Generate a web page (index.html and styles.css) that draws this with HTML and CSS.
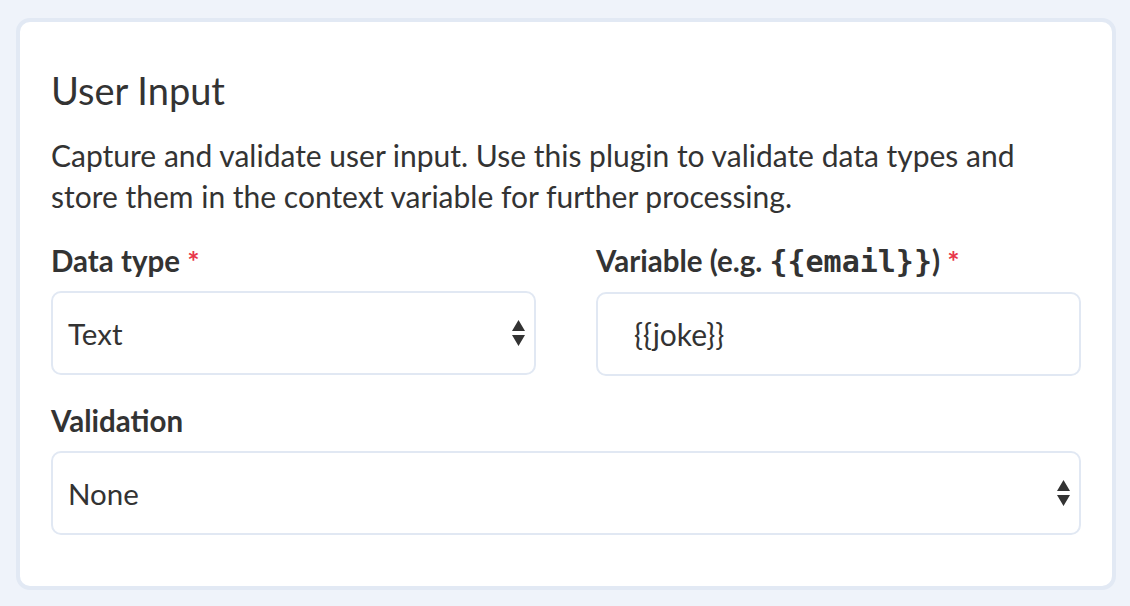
FILE: index.html
```html
<!DOCTYPE html>
<html lang="en">
<head>
<meta charset="utf-8">
<title>User Input</title>
<link rel="stylesheet" href="styles.css">
</head>
<body>
  <div class="card">
    <h1 class="title">User Input</h1>
    <p class="desc">Capture and validate user input. Use this plugin to validate data types and store them in the context variable for further processing.</p>
    <div class="row">
      <div class="field">
        <div class="label">Data type <span class="req">*</span></div>
        <div class="select">
          <span>Text</span>
          <svg class="arrows" width="13" height="27" viewBox="0 0 13 27"><path d="M6.5 0 L13 11 L0 11 Z M0 15 L13 15 L6.5 26 Z" fill="#333"/></svg>
        </div>
      </div>
      <div class="field">
        <div class="label">Variable (e.g. <code class="code">{{email}}</code>) <span class="req">*</span></div>
        <div class="input">{{joke}}</div>
      </div>
    </div>
    <div class="field field-full">
      <div class="label">Validation</div>
      <div class="select">
        <span>None</span>
        <svg class="arrows" width="13" height="27" viewBox="0 0 13 27"><path d="M6.5 0 L13 11 L0 11 Z M0 15 L13 15 L6.5 26 Z" fill="#333"/></svg>
      </div>
    </div>
  </div>
</body>
</html>
```

FILE: styles.css
```css
html, body {
  margin: 0;
  padding: 0;
}
body {
  background: #eff3fa;
  font-family: Lato, "Open Sans", sans-serif;
  color: #333333;
  padding: 18px 14px 0 16px;
}
.card {
  box-sizing: border-box;
  width: 1100px;
  background: #ffffff;
  border: 4px solid #e2e9f4;
  border-radius: 14px;
  padding: 45px 31px 51px 31px;
}
.title {
  margin: 0;
  font-size: 38px;
  line-height: 46px;
  font-weight: 400;
}
.desc {
  margin: 22px 0 0 0;
  font-size: 30px;
  line-height: 41px;
}
.row {
  display: grid;
  grid-template-columns: 1fr 1fr;
  column-gap: 60px;
  margin-top: 27px;
}
.field-full {
  margin-top: 28px;
}
.label {
  font-size: 29.5px;
  line-height: 34px;
  font-weight: 700;
  margin-bottom: 13px;
  white-space: nowrap;
}
.field-full .label {
  margin-bottom: 13px;
}
.code {
  font-family: "DejaVu Sans Mono", "Liberation Mono", monospace;
  font-weight: 700;
  font-size: 30px;
}
.req {
  color: #e8354b;
  font-size: 29px;
  font-weight: 700;
}
.select, .input {
  box-sizing: border-box;
  height: 84px;
  border: 2px solid #e1e8f3;
  border-radius: 10px;
  display: flex;
  align-items: center;
  font-size: 29.5px;
}
.select {
  justify-content: space-between;
  padding: 0 9px 0 15px;
}
.input {
  padding: 0 0 0 36px;
  margin-top: 2px;
  font-size: 30px;
}
.arrows {
  display: block;
}
```
